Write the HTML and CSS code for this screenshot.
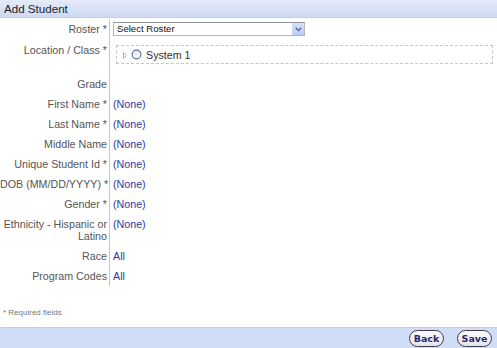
FILE: index.html
```html
<!DOCTYPE html>
<html>
<head>
<meta charset="utf-8">
<link rel="stylesheet" href="styles.css">
</head>
<body>
<div class="page">
  <div class="header">Add Student</div>
  <div class="form">
    <div class="label row-roster">Roster *</div>
    <div class="value row-roster">
      <div class="select">
        <span class="select-text">Select Roster</span>
        <span class="select-btn">
          <svg width="7" height="5" viewBox="0 0 7 5"><path d="M0.8 0.8 L3.5 3.6 L6.2 0.8" fill="none" stroke="#4d6185" stroke-width="1.3"/></svg>
        </span>
      </div>
    </div>
    <div class="label row-loc">Location / Class *</div>
    <div class="value row-loc">
      <div class="tree">
        <svg class="tri" width="4" height="7" viewBox="0 0 4 7"><path d="M0.5 0.5 L3.5 3.5 L0.5 6.5 Z" fill="#fff" stroke="#b4b4b4" stroke-width="1"/></svg>
        <svg class="radio" width="11" height="11" viewBox="0 0 11 11"><defs><linearGradient id="rg" x1="0" y1="0" x2="1" y2="1"><stop offset="0" stop-color="#e6e8ee"/><stop offset="1" stop-color="#ffffff"/></linearGradient></defs><circle cx="5.5" cy="5.5" r="4.4" fill="url(#rg)" stroke="#5a6e96" stroke-width="1.1"/></svg>
        <span class="tree-text">System 1</span>
      </div>
    </div>
    <div class="label">Grade</div><div class="value"></div>
    <div class="label">First Name *</div><div class="value">(None)</div>
    <div class="label">Last Name *</div><div class="value">(None)</div>
    <div class="label">Middle Name</div><div class="value">(None)</div>
    <div class="label">Unique Student Id *</div><div class="value">(None)</div>
    <div class="label tight">DOB (MM/DD/YYYY) *</div><div class="value">(None)</div>
    <div class="label">Gender *</div><div class="value">(None)</div>
    <div class="label">Ethnicity - Hispanic or Latino</div><div class="value">(None)</div>
    <div class="label">Race</div><div class="value">All</div>
    <div class="label">Program Codes</div><div class="value">All</div>
  </div>
  <div class="spacer"></div>
  <div class="note">* Required fields</div>
  <div class="footer">
    <button class="btn">Back</button>
    <button class="btn">Save</button>
  </div>
</div>
</body>
</html>
```
FILE: styles.css
```css
html, body {
  margin: 0;
  padding: 0;
  background: #ffffff;
}
.page {
  width: 497px;
  height: 348px;
  display: flex;
  flex-direction: column;
  font-family: "Liberation Sans", Arial, sans-serif;
  overflow: hidden;
}
.header {
  height: 18px;
  box-sizing: border-box;
  background: linear-gradient(#e4ebf9, #cdd9f2);
  border-bottom: 1px solid #c3cfe8;
  color: #1e1e1e;
  font-size: 11.6px;
  line-height: 17px;
  padding-left: 4px;
}
.form {
  display: grid;
  grid-template-columns: 110px 1fr;
  padding-top: 1px;
}
.label {
  text-align: right;
  padding: 4px 2px 4px 0;
  font-size: 10.7px;
  line-height: 12px;
  color: #555555;
  border-right: 1px solid #c8c8c8;
}
.label.tight {
  white-space: nowrap;
}
.value {
  padding: 4px 4px 4px 3px;
  font-size: 10.7px;
  line-height: 12px;
  color: #2b3b9e;
}
.value.row-roster {
  padding-top: 3px;
  padding-bottom: 3px;
}
.label.row-loc {
  padding-top: 5px;
}
.value.row-loc {
  padding-top: 6px;
  padding-bottom: 10px;
}
.select {
  width: 192px;
  height: 14px;
  box-sizing: border-box;
  border: 1px solid #b3b8bf;
  border-top-color: #8f959c;
  display: flex;
  align-items: center;
  justify-content: space-between;
  background: #fff;
}
.select-text {
  color: #111;
  font-size: 9.6px;
  line-height: 12px;
  padding-left: 3px;
}
.select-btn {
  width: 12px;
  height: 12px;
  background: linear-gradient(#d3e0fb, #b9cdf7);
  display: flex;
  align-items: center;
  justify-content: center;
}
.tree {
  margin-left: 3px;
  height: 19px;
  box-sizing: border-box;
  border: 1px dashed #c6c6c6;
  display: flex;
  align-items: center;
  padding-left: 6px;
}
.tri {
  margin-right: 4px;
  margin-top: 1px;
}
.radio {
  margin-right: 4px;
}
.tree-text {
  color: #333;
  font-size: 10.7px;
  line-height: 12px;
}
.spacer {
  flex: 1;
}
.note {
  font-size: 8px;
  color: #777;
  padding-left: 3px;
  line-height: 10px;
  margin-bottom: 9px;
}
.footer {
  height: 21px;
  box-sizing: border-box;
  background: #d1ddf6;
  border-top: 1px solid #c2cde6;
  display: flex;
  justify-content: flex-end;
  align-items: center;
  gap: 13px;
  padding-right: 5px;
}
.btn {
  width: 35px;
  height: 17px;
  border: 1px solid #3c3c4a;
  border-radius: 9px;
  background: linear-gradient(#fafafd, #e2e3ee);
  font-family: "DejaVu Sans", Verdana, sans-serif;
  font-weight: bold;
  font-size: 9.5px;
  color: #2c2a6e;
  padding: 0;
  line-height: 15px;
}
```
